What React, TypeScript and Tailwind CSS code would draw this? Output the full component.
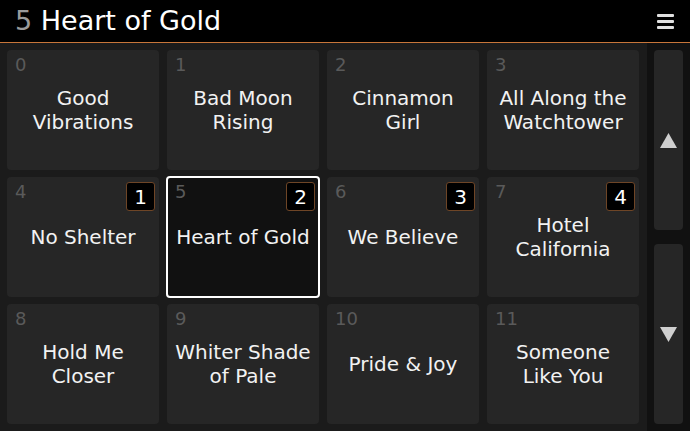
import React from "react"

type Song = { n: number; title: string[]; badge?: number; hidden?: boolean }

const songs: Song[] = [
  { n: 0, title: ["Good", "Vibrations"] },
  { n: 1, title: ["Bad Moon", "Rising"] },
  { n: 2, title: ["Cinnamon", "Girl"] },
  { n: 3, title: ["All Along the", "Watchtower"] },
  { n: 4, title: ["No Shelter"], badge: 1 },
  { n: 5, title: ["Heart of Gold"], badge: 2 },
  { n: 6, title: ["We Believe"], badge: 3 },
  { n: 7, title: ["Hotel", "California"], badge: 4 },
  { n: 8, title: ["Hold Me", "Closer"] },
  { n: 9, title: ["Whiter Shade", "of Pale"] },
  { n: 10, title: ["Pride & Joy"] },
  { n: 11, title: ["Someone", "Like You"] },
  // next page peeks in at the bottom edge
  { n: 12, title: [], hidden: true },
  { n: 13, title: [], hidden: true },
  { n: 14, title: [], hidden: true },
  { n: 15, title: [], hidden: true },
]

const current = 5

function Tile({ song }: { song: Song }) {
  const selected = song.n === current
  if (song.hidden) return <div className="h-[120px] rounded-[4px] bg-[#262626]" />
  return (
    <div
      className={
        selected
          ? "relative -m-px flex h-[122px] flex-col items-center justify-center rounded-[4px] border-2 border-white bg-[#111111]"
          : "relative flex h-[120px] flex-col items-center justify-center rounded-[4px] bg-[#262626]"
      }
    >
      <span
        className={
          selected
            ? "absolute left-[7px] top-[3px] text-[18px] leading-[22px] text-[#5a5a5a]"
            : "absolute left-[8px] top-[4px] text-[18px] leading-[22px] text-[#5a5a5a]"
        }
      >
        {song.n}
      </span>
      {song.badge !== undefined && (
        <span
          className={
            selected
              ? "absolute right-[3px] top-[4px] flex h-[29px] w-[29px] items-center justify-center rounded-[3px] border border-[#6e4526] bg-black text-[20px] text-white"
              : "absolute right-[4px] top-[5px] flex h-[29px] w-[29px] items-center justify-center rounded-[3px] border border-[#6e4526] bg-black text-[20px] text-white"
          }
        >
          {song.badge}
        </span>
      )}
      {song.title.map((line, i) => (
        <span key={i} className="text-center text-[20px] leading-[24px] text-[#f2f2f2]">
          {line}
        </span>
      ))}
    </div>
  )
}

export default function App() {
  return (
    <div className="flex h-[431px] w-[690px] flex-col overflow-hidden bg-black font-['DejaVu_Sans',sans-serif]">
      {/* header */}
      <div className="flex h-[43px] shrink-0 items-center justify-between border-b border-[#c8763a] bg-black pl-[15px] pr-[16px]">
        <div className="text-[27px] leading-[42px]">
          <span className="text-[#9a9a9a]">5</span>
          <span className="text-white"> Heart of Gold</span>
        </div>
        <div className="flex w-[17px] flex-col gap-[3px] pt-[1px]">
          <div className="h-[3px] rounded-[1px] bg-[#e0e0e0]" />
          <div className="h-[3px] rounded-[1px] bg-[#e0e0e0]" />
          <div className="h-[3px] rounded-[1px] bg-[#e0e0e0]" />
        </div>
      </div>

      <div className="flex min-h-0 flex-1">
        {/* song grid */}
        <div className="w-[647px] overflow-hidden bg-[#1b1b1b] pl-[7px] pt-[7px]">
          <div className="grid grid-cols-[repeat(4,152px)] gap-x-[8px] gap-y-[7px]">
            {songs.map((s) => (
              <Tile key={s.n} song={s} />
            ))}
          </div>
        </div>

        {/* scroll buttons */}
        <div className="flex flex-1 flex-col gap-[14px] bg-[#111111] pl-[7px] pr-[7px] pt-[7px]">
          <div className="flex h-[180px] items-center justify-center rounded-[4px] bg-[#262626]">
            <svg width="17" height="15" viewBox="0 0 17 15">
              <path d="M8.5 0 L17 15 L0 15 Z" fill="#cfcfcf" />
            </svg>
          </div>
          <div className="flex h-[180px] items-center justify-center rounded-[4px] bg-[#262626]">
            <svg width="17" height="15" viewBox="0 0 17 15">
              <path d="M0 0 L17 0 L8.5 15 Z" fill="#cfcfcf" />
            </svg>
          </div>
        </div>
      </div>
    </div>
  )
}
